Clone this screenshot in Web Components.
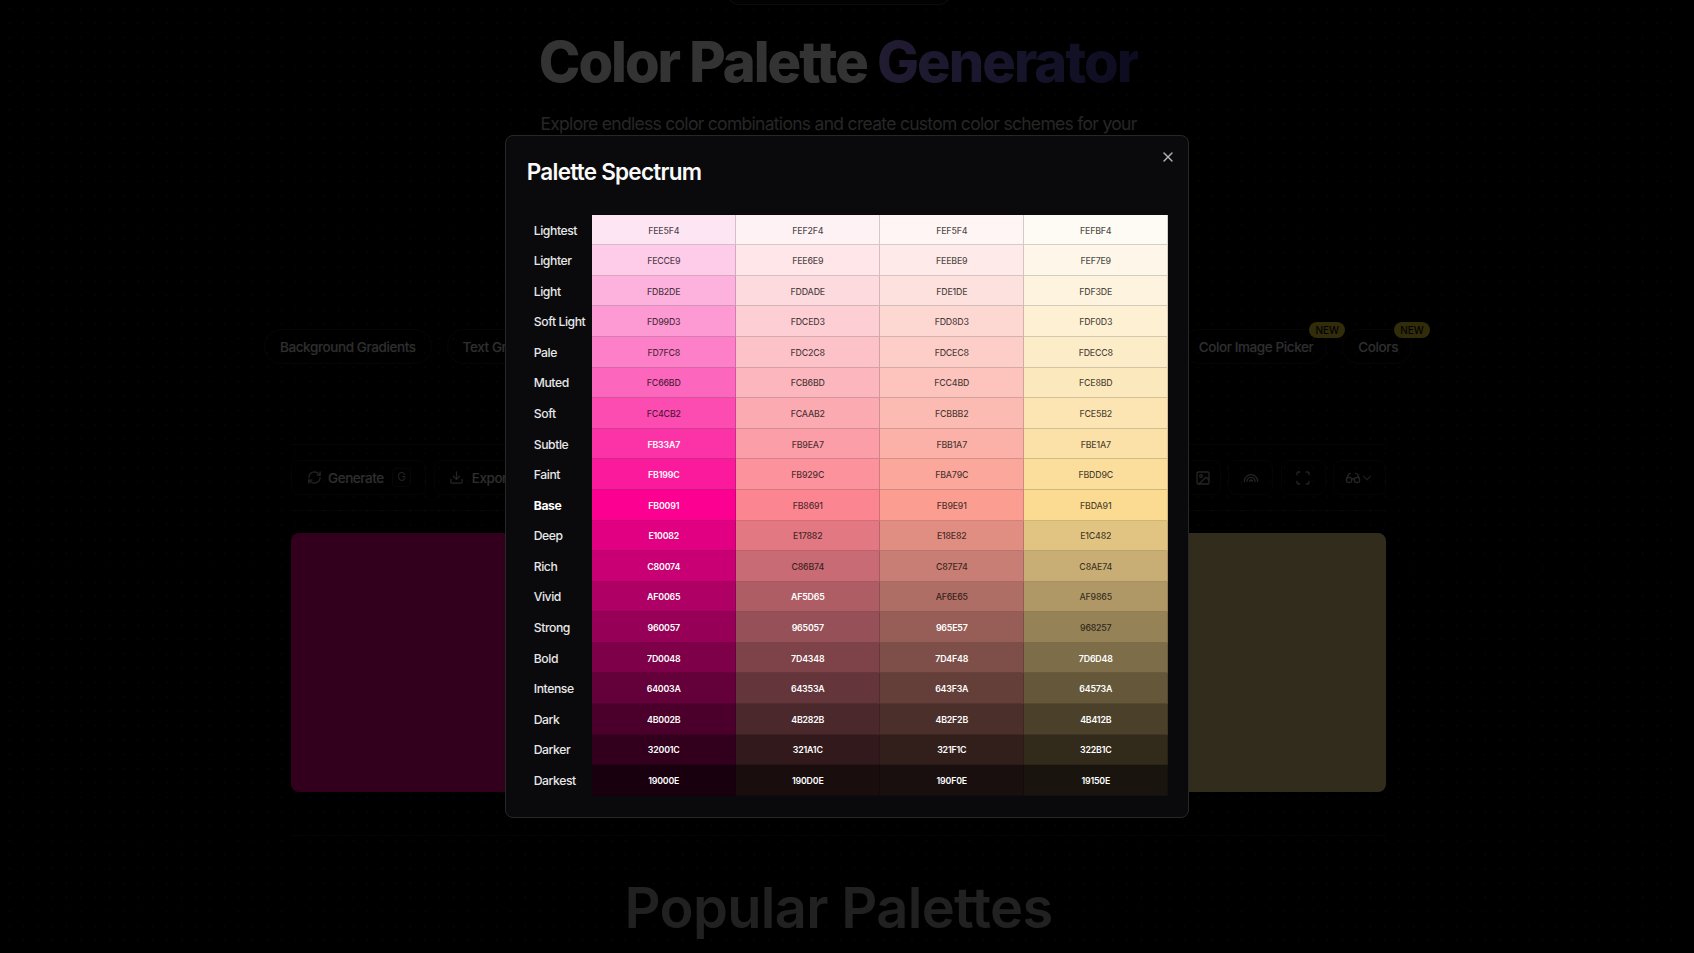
<!doctype html>
<html lang="en">
<head>
<meta charset="utf-8">
<title>Color Palette Generator</title>
<style>
  html, body { margin: 0; height: 100%; background: #000; overflow: hidden; }
  body { font-family: Inter, "Liberation Sans", sans-serif; color: #fff; }
</style>
</head>
<body>
<palette-page>
  <site-hero></site-hero>
  <tool-tabs>
    <tab-pill slot="left">Background Gradients</tab-pill>
    <tab-pill slot="left">Text Gradients</tab-pill>
    <tab-pill slot="right" badge>Color Image Picker</tab-pill>
    <tab-pill slot="right" badge>Colors</tab-pill>
  </tool-tabs>
  <tool-bar>
    <tool-btn slot="left" icon="refresh" kbd="G">Generate</tool-btn>
    <tool-btn slot="left" icon="download" style="width:300px">Export</tool-btn>
    <tool-btn slot="right" icon="image" style="width:35px"></tool-btn>
    <tool-btn slot="right" icon="rainbow" style="width:45px"></tool-btn>
    <tool-btn slot="right" icon="scan" style="width:45px"></tool-btn>
    <tool-btn slot="right" icon="glasses" chevron style="width:53px"></tool-btn>
  </tool-bar>
  <swatch-row colors="FB0091 FB8691 FB9E91 FBDA91"></swatch-row>
  <section-title>Popular Palettes</section-title>
</palette-page>
<spectrum-modal heading="Palette Spectrum">
  <spectrum-table></spectrum-table>
</spectrum-modal>

<script>
const ICONS = {
  refresh: '<path d="M3 12a9 9 0 0 1 9-9 9.75 9.75 0 0 1 6.74 2.74L21 8"/><path d="M21 3v5h-5"/><path d="M21 12a9 9 0 0 1-9 9 9.75 9.75 0 0 1-6.74-2.74L3 16"/><path d="M8 16H3v5"/>',
  download: '<path d="M21 15v4a2 2 0 0 1-2 2H5a2 2 0 0 1-2-2v-4"/><path d="m7 10 5 5 5-5"/><path d="M12 15V3"/>',
  image: '<rect x="3" y="3" width="18" height="18" rx="2"/><circle cx="9" cy="9" r="2"/><path d="m21 15-3.086-3.086a2 2 0 0 0-2.828 0L6 21"/>',
  rainbow: '<path d="M22 17a10 10 0 0 0-20 0"/><path d="M6 17a6 6 0 0 1 12 0"/><path d="M10 17a2 2 0 0 1 4 0"/>',
  scan: '<path d="M3 7V5a2 2 0 0 1 2-2h2"/><path d="M17 3h2a2 2 0 0 1 2 2v2"/><path d="M21 17v2a2 2 0 0 1-2 2h-2"/><path d="M7 21H5a2 2 0 0 1-2-2v-2"/>',
  glasses: '<circle cx="6" cy="15" r="4"/><circle cx="18" cy="15" r="4"/><path d="M14 15a2 2 0 0 0-2-2 2 2 0 0 0-2 2"/><path d="M2.5 13 5 7c.7-1.3 1.4-2 3-2"/><path d="M21.5 13 19 7c-.7-1.3-1.5-2-3-2"/>',
  chevron: '<path d="m6 9 6 6 6-6"/>',
  close: '<path d="M18 6 6 18"/><path d="m6 6 12 12"/>'
};
const icon = (name, size) =>
  `<svg width="${size}" height="${size}" viewBox="0 0 24 24" fill="none" stroke="currentColor" stroke-width="2" stroke-linecap="round" stroke-linejoin="round">${ICONS[name]}</svg>`;

// small helper, every element here is just a shadow root with fixed markup
class Base extends HTMLElement {
  constructor() {
    super();
    this.attachShadow({ mode: 'open' });
  }
}

customElements.define('palette-page', class extends Base {
  constructor() {
    super();
    this.shadowRoot.innerHTML = `
      <style>
        :host {
          display: block;
          width: 1677px;
          height: 953px;
          overflow: hidden;
          background-image: radial-gradient(circle, rgba(255,255,255,.1) 1px, transparent 1.3px);
          background-size: 14.33px 14.33px;
          background-position: 2.2px 2px;
        }
      </style>
      <slot></slot>`;
  }
});

customElements.define('site-hero', class extends Base {
  constructor() {
    super();
    this.shadowRoot.innerHTML = `
      <style>
        :host { display: flex; flex-direction: column; align-items: center; height: 329px; }
        .chip {
          width: 224px; height: 36px; margin-top: -31.5px; box-sizing: border-box;
          border-radius: 12px; border: 1px solid rgba(255,255,255,.2); background: #0d0d12;
        }
        h1 {
          margin: 23px 0 0; font-size: 56px; line-height: 68px; font-weight: 800;
          letter-spacing: -0.036em; white-space: nowrap;
        }
        h1 span {
          background: linear-gradient(90deg, #a78bfa, #7c6fe0 45%, #3b3a9c);
          -webkit-background-clip: text; background-clip: text; color: transparent;
        }
        p {
          margin: 14.5px 0 0; width: 700px; text-align: center; font-size: 17.5px; line-height: 28px;
          font-weight: 400; letter-spacing: -0.04em; color: #bdbdbd;
        }
      </style>
      <div class="chip"></div>
      <h1>Color Palette <span>Generator</span></h1>
      <p>Explore endless color combinations and create custom color schemes for your</p>`;
  }
});

customElements.define('tool-tabs', class extends Base {
  constructor() {
    super();
    this.shadowRoot.innerHTML = `
      <style>
        :host { display: flex; justify-content: space-between; height: 115px; padding: 0 265px 0 264px; }
        div { display: flex; gap: 15px; }
      </style>
      <div><slot name="left"></slot></div>
      <div><slot name="right"></slot></div>`;
  }
});

customElements.define('tab-pill', class extends Base {
  constructor() {
    super();
    const badge = this.hasAttribute('badge') ? '<b>NEW</b>' : '';
    this.shadowRoot.innerHTML = `
      <style>
        :host {
          display: block; position: relative; height: 35px; box-sizing: border-box;
          padding: 0 15px; border-radius: 18px; border: 1px solid rgba(255,255,255,.13);
          font-size: 13.5px; line-height: 35px; font-weight: 500; letter-spacing: -0.03em;
          color: #e4e4e7; white-space: nowrap;
        }
        :host([badge]) { padding: 0 13px 0 15px; }
        b {
          position: absolute; top: -8px; right: -19px; width: 36px; height: 16px;
          border-radius: 8px; background: #f4d92e; color: #111;
          font-size: 10px; line-height: 16px; font-weight: 500; text-align: center; letter-spacing: 0;
        }
      </style>
      <slot></slot>${badge}`;
  }
});

customElements.define('tool-bar', class extends Base {
  constructor() {
    super();
    this.shadowRoot.innerHTML = `
      <style>
        :host {
          display: flex; justify-content: space-between; margin: 0 291px; padding: 15px 0;
          border-top: 1px solid rgba(255,255,255,.1); border-bottom: 1px solid rgba(255,255,255,.1);
        }
        div { display: flex; gap: 8px; }
        .end { gap: 7.5px; }
      </style>
      <div><slot name="left"></slot></div>
      <div class="end"><slot name="right"></slot></div>`;
  }
});

customElements.define('tool-btn', class extends Base {
  constructor() {
    super();
    const name = this.getAttribute('icon');
    const kbd = this.getAttribute('kbd');
    const size = name === 'refresh' || name === 'download' ? 15 : 16;
    this.shadowRoot.innerHTML = `
      <style>
        :host {
          display: flex; align-items: center; justify-content: center; gap: 6px;
          height: 35px; box-sizing: border-box; padding: 0 14px 0 15px;
          border: 1px solid rgba(255,255,255,.1); border-radius: 8px;
          font-size: 13.5px; font-weight: 500; letter-spacing: -0.033em; color: #e4e4e7;
        }
        :host([style]) { padding: 0 0; }
        :host([icon=download]) { justify-content: flex-start; padding-left: 14.5px; gap: 7.5px; }
        svg { flex: none; }
        .mark { opacity: .8; }
        kbd {
          width: 19px; height: 19px; margin-left: 2px; box-sizing: border-box;
          border: 1px solid rgba(255,255,255,.14); border-radius: 5px;
          font: 400 11.5px/16px Inter, sans-serif; text-align: center; color: #a1a1aa;
        }
      </style>
      <span class="mark" style="display:flex">${icon(name, size)}</span>
      ${this.hasAttribute('chevron') ? `<span style="display:flex;margin-left:-7px;opacity:.6">${icon('chevron', 14)}</span>` : ''}
      <slot></slot>
      ${kbd ? `<kbd>${kbd}</kbd>` : ''}`;
  }
});

customElements.define('swatch-row', class extends Base {
  constructor() {
    super();
    const cols = this.getAttribute('colors').split(' ');
    this.shadowRoot.innerHTML = `
      <style>
        :host {
          display: flex; height: 259px; margin: 22px 291px 0; border-radius: 8px; overflow: hidden;
        }
        div { flex: 1; }
      </style>
      ${cols.map(c => `<div style="background:#${c}"></div>`).join('')}`;
  }
});

customElements.define('section-title', class extends Base {
  constructor() {
    super();
    this.shadowRoot.innerHTML = `
      <style>
        :host { display: block; margin: 43px 291px 0; padding-top: 37.5px; border-top: 1px solid rgba(255,255,255,.1); text-align: center; }
        h2 { margin: 0; font-size: 56px; line-height: 68px; font-weight: 600; letter-spacing: -0.012em; color: #a3a3a3; }
      </style>
      <h2><slot></slot></h2>`;
  }
});

customElements.define('spectrum-modal', class extends Base {
  constructor() {
    super();
    this.shadowRoot.innerHTML = `
      <style>
        :host {
          position: fixed; inset: 0; display: flex; align-items: center; justify-content: center;
          background: rgba(0,0,0,.8);
        }
        .box {
          position: relative; width: 684.5px; height: 682.5px; box-sizing: border-box;
          padding: 21px 20.5px 21px 21px; background: #0a0a0c;
          border: 1px solid #27272a; border-radius: 8px;
          display: flex; flex-direction: column; justify-content: space-between;
        }
        h2 { margin: 0; font-size: 22.5px; line-height: 30px; font-weight: 600; letter-spacing: -0.033em; color: #fafafa; }
        button {
          position: absolute; top: 13px; right: 12px; width: 16px; height: 16px; padding: 0;
          border: 0; background: none; color: #b4b4b8; display: flex;
        }
      </style>
      <div class="box">
        <h2>${this.getAttribute('heading')}</h2>
        <button>${icon('close', 16)}</button>
        <slot></slot>
      </div>`;
  }
});

const ROWS = ['Lightest','Lighter','Light','Soft Light','Pale','Muted','Soft','Subtle','Faint','Base','Deep','Rich','Vivid','Strong','Bold','Intense','Dark','Darker','Darkest'];
const SHADES = [
  'FEE5F4 FECCE9 FDB2DE FD99D3 FD7FC8 FC66BD FC4CB2 FB33A7 FB199C FB0091 E10082 C80074 AF0065 960057 7D0048 64003A 4B002B 32001C 19000E',
  'FEF2F4 FEE6E9 FDDADE FDCED3 FDC2C8 FCB6BD FCAAB2 FB9EA7 FB929C FB8691 E17882 C86B74 AF5D65 965057 7D4348 64353A 4B282B 321A1C 190D0E',
  'FEF5F4 FEEBE9 FDE1DE FDD8D3 FDCEC8 FCC4BD FCBBB2 FBB1A7 FBA79C FB9E91 E18E82 C87E74 AF6E65 965E57 7D4F48 643F3A 4B2F2B 321F1C 190F0E',
  'FEFBF4 FEF7E9 FDF3DE FDF0D3 FDECC8 FCE8BD FCE5B2 FBE1A7 FBDD9C FBDA91 E1C482 C8AE74 AF9865 968257 7D6D48 64573A 4B412B 322B1C 19150E'
].map(s => s.split(' '));
// first row index in each column where the label flips to white
const WHITE_FROM = [7, 12, 13, 14];

customElements.define('spectrum-table', class extends Base {
  constructor() {
    super();
    let cells = '';
    ROWS.forEach((row, r) => {
      cells += `<span class="label${row === 'Base' ? ' base' : ''}">${row}</span>`;
      SHADES.forEach((col, c) => {
        const hex = col[r];
        cells += `<span class="cell${r >= WHITE_FROM[c] ? ' light' : ''}" style="background:#${hex}">${hex}</span>`;
      });
    });
    this.shadowRoot.innerHTML = `
      <style>
        :host {
          display: grid; flex: none; height: 581px;
          grid-template-columns: 65px repeat(4, 144px);
          grid-template-rows: repeat(19, 1fr);
        }
        .label {
          display: flex; align-items: center; padding-left: 7px; white-space: nowrap;
          font-size: 12.2px; font-weight: 500; letter-spacing: -0.035em; color: #e7e7e9;
        }
        .base { font-weight: 700; color: #fff; }
        .cell {
          display: flex; align-items: center; justify-content: center;
          box-shadow: inset -1px -1px 0 rgba(0,0,0,.17);
          font-size: 8.8px; font-weight: 500; letter-spacing: -0.02em; color: rgba(0,0,0,.72);
        }
        .light { color: #fff; font-weight: 600; }
      </style>
      ${cells}`;
  }
});
</script>
</body>
</html>
